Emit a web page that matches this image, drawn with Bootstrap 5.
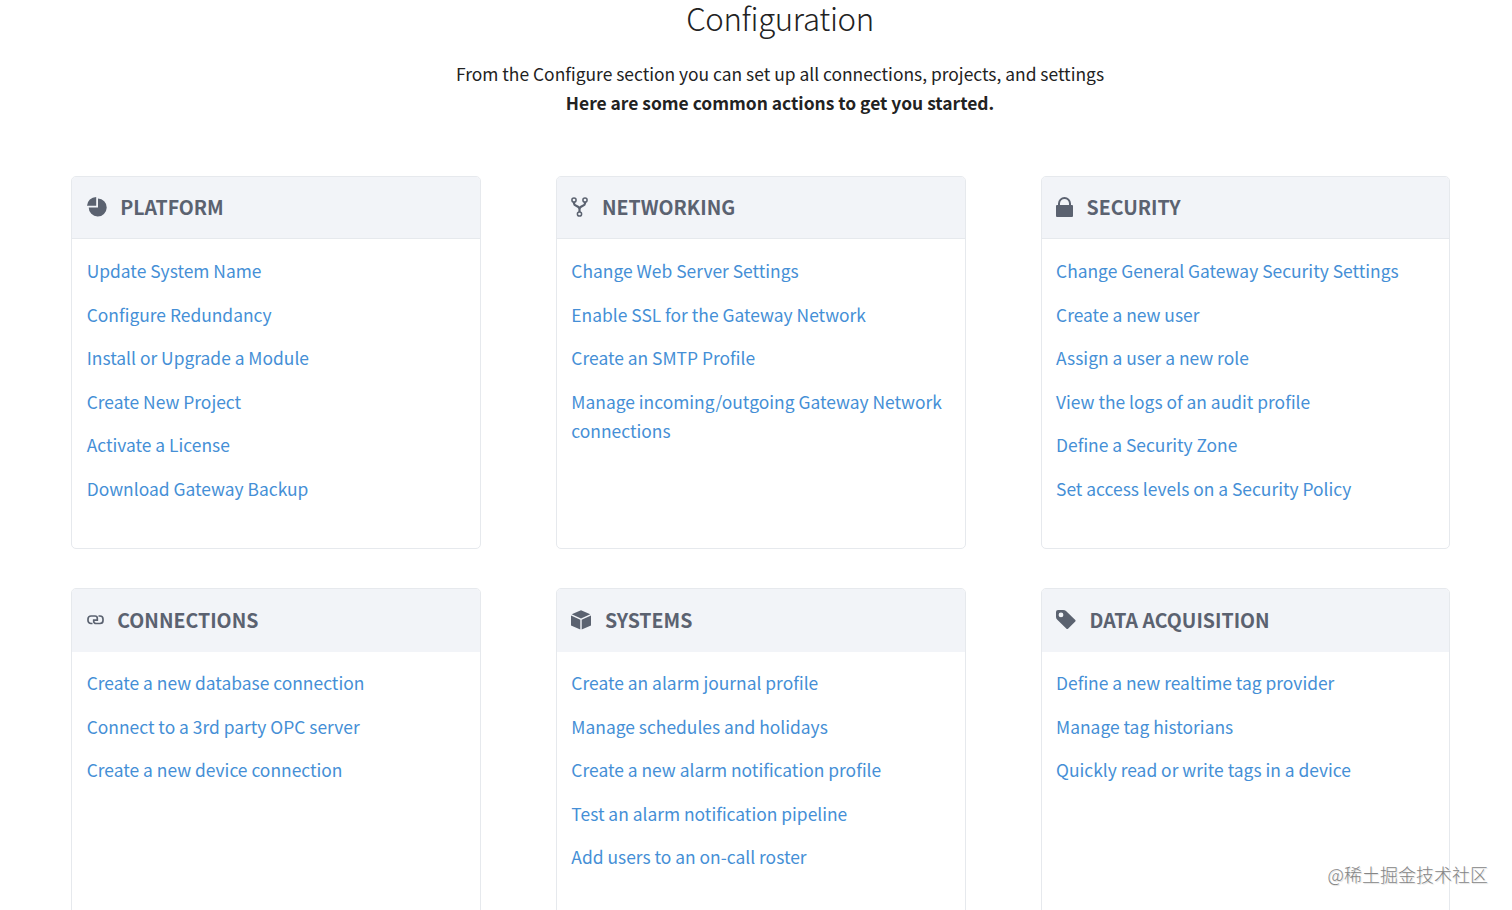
<!DOCTYPE html>
<html lang="en">
<head>
<meta charset="utf-8">
<meta name="viewport" content="width=device-width, initial-scale=1">
<title>Configuration</title>
<link href="https://cdn.jsdelivr.net/npm/bootstrap@5.3.0/dist/css/bootstrap.min.css" rel="stylesheet">
<style>
body{font-family:"Noto Sans CJK SC",sans-serif;font-size:17.420px;line-height:29.5px;color:#222;background:#fff}
.page{height:910px}
.intro{padding-left:48px;height:176px}
.intro h1{font-weight:300;font-size:31.2px;letter-spacing:-.35px;line-height:36px;margin:0 0 23px;color:#222}
.intro p{line-height:29px}
.actions{padding:0 61.6px 0 71.4px}
.actions .row{--bs-gutter-x:75px;--bs-gutter-y:39px}
.card{--bs-card-border-color:#e6e9ed;--bs-card-border-radius:5px;--bs-card-inner-border-radius:4px;height:373.3px}
.card-header{--bs-card-cap-bg:#f2f4f8;--bs-card-cap-padding-x:14.2px;height:62px;padding-bottom:10px;color:#5b6270}
.card-header h2{font-size:19.5px;font-weight:700;line-height:30px;margin-left:13.7px}
.card-header svg{height:20px;fill:#5b6270}
.lower .card-header{height:63px;padding-bottom:9px;border-bottom-color:#f2f4f8}
.card-body{--bs-card-spacer-x:14.3px;--bs-card-spacer-y:17px}
.lower .card-body{padding-top:15.8px}
.card-body ul{gap:14.05px}
.card-body a{color:#458fd6}
.watermark{right:24px;bottom:21px;font-size:18px;line-height:30px;color:#858585;font-weight:300;text-shadow:1px 1px 1px #ddd}
</style>
</head>
<body>
<main class="page position-relative overflow-hidden">
<header class="intro text-center">
<h1>Configuration</h1>
<p class="mb-0">From the Configure section you can set up all connections, projects, and settings<br><strong>Here are some common actions to get you started.</strong></p>
</header>
<section class="actions">
<div class="row row-cols-3">
<div class="col"><div class="card"><div class="card-header d-flex align-items-center"><svg width="20" viewBox="0 0 20 20"><path d="M9.200 0v8.800H0A9.200 9.200 0 0 1 9.200 0zM11 1.500a9 9 0 1 1-9.300 9H11z"/></svg><h2 class="mb-0">PLATFORM</h2></div>
<div class="card-body"><ul class="list-unstyled d-flex flex-column mb-0">
<li><a class="text-decoration-none" href="#">Update System Name</a></li><li><a class="text-decoration-none" href="#">Configure Redundancy</a></li><li><a class="text-decoration-none" href="#">Install or Upgrade a Module</a></li><li><a class="text-decoration-none" href="#">Create New Project</a></li><li><a class="text-decoration-none" href="#">Activate a License</a></li><li><a class="text-decoration-none" href="#">Download Gateway Backup</a></li></ul></div></div></div>
<div class="col"><div class="card"><div class="card-header d-flex align-items-center"><svg width="17" viewBox="0 0 17 20"><g fill="none" stroke="#5b6270"><g stroke-width="1.500"><circle cx="3" cy="3" r="2.100"/><circle cx="14" cy="3" r="2.100"/><circle cx="8.500" cy="17" r="2.100"/></g><path stroke-width="2.200" d="M3 5v1.500C3 9.500 8.500 8.500 8.500 12v3M14 5v1.500C14 9.500 8.500 8.500 8.500 12"/></g></svg><h2 class="mb-0">NETWORKING</h2></div>
<div class="card-body"><ul class="list-unstyled d-flex flex-column mb-0">
<li><a class="text-decoration-none" href="#">Change Web Server Settings</a></li><li><a class="text-decoration-none" href="#">Enable SSL for the Gateway Network</a></li><li><a class="text-decoration-none" href="#">Create an SMTP Profile</a></li><li><a class="text-decoration-none" href="#">Manage incoming/outgoing Gateway Network connections</a></li></ul></div></div></div>
<div class="col"><div class="card"><div class="card-header d-flex align-items-center"><svg width="17" viewBox="0 0 17 20"><path d="M0 9a1 1 0 0 1 1-1h1V6.500a6.500 6.500 0 0 1 13 0V8h1a1 1 0 0 1 1 1v10a1 1 0 0 1-1 1H1a1 1 0 0 1-1-1zM4 8h9V6.500a4.500 4.500 0 0 0-9 0z"/></svg><h2 class="mb-0">SECURITY</h2></div>
<div class="card-body"><ul class="list-unstyled d-flex flex-column mb-0">
<li><a class="text-decoration-none" href="#">Change General Gateway Security Settings</a></li><li><a class="text-decoration-none" href="#">Create a new user</a></li><li><a class="text-decoration-none" href="#">Assign a user a new role</a></li><li><a class="text-decoration-none" href="#">View the logs of an audit profile</a></li><li><a class="text-decoration-none" href="#">Define a Security Zone</a></li><li><a class="text-decoration-none" href="#">Set access levels on a Security Policy</a></li></ul></div></div></div>
<div class="col lower"><div class="card"><div class="card-header d-flex align-items-center"><svg width="17" viewBox="0 0 17 20"><path fill="none" stroke="#5b6270" stroke-width="1.700" d="M5.500 13.500H4A3 3 0 0 1 1 10.500V9A3 3 0 0 1 4 6H8A2.300 2.300 0 0 1 10.300 8.300V10.200H6M11.500 6H13A3 3 0 0 1 16 9V10.500A3 3 0 0 1 13 13.500H9A2.300 2.300 0 0 1 6.700 11.200V9.500"/></svg><h2 class="mb-0">CONNECTIONS</h2></div>
<div class="card-body"><ul class="list-unstyled d-flex flex-column mb-0">
<li><a class="text-decoration-none" href="#">Create a new database connection</a></li><li><a class="text-decoration-none" href="#">Connect to a 3rd party OPC server</a></li><li><a class="text-decoration-none" href="#">Create a new device connection</a></li></ul></div></div></div>
<div class="col lower"><div class="card"><div class="card-header d-flex align-items-center"><svg width="20" viewBox="0 0 20 20"><path d="M10 .3L19.300 4.300 10 8.500.7 4.300zM0 5.500l9.300 4.200V19.500L0 15.500zM20 5.500l-9.300 4.200V19.500L20 15.500z"/></svg><h2 class="mb-0">SYSTEMS</h2></div>
<div class="card-body"><ul class="list-unstyled d-flex flex-column mb-0">
<li><a class="text-decoration-none" href="#">Create an alarm journal profile</a></li><li><a class="text-decoration-none" href="#">Manage schedules and holidays</a></li><li><a class="text-decoration-none" href="#">Create a new alarm notification profile</a></li><li><a class="text-decoration-none" href="#">Test an alarm notification pipeline</a></li><li><a class="text-decoration-none" href="#">Add users to an on-call roster</a></li></ul></div></div></div>
<div class="col lower"><div class="card"><div class="card-header d-flex align-items-center"><svg width="20" viewBox="0 0 20 20"><path fill-rule="evenodd" d="M0 2Q0 0 2 0H7Q9 0 10 1L19.300 10Q20 10.700 19.300 11.500L12 18.700Q11.200 19.500 10.500 18.700L1.300 9.700Q0 8.500 0 7zM5 2.500a2.400 2.400 0 1 0 0 4.800 2.400 2.400 0 0 0 0-4.800z"/></svg><h2 class="mb-0">DATA ACQUISITION</h2></div>
<div class="card-body"><ul class="list-unstyled d-flex flex-column mb-0">
<li><a class="text-decoration-none" href="#">Define a new realtime tag provider</a></li><li><a class="text-decoration-none" href="#">Manage tag historians</a></li><li><a class="text-decoration-none" href="#">Quickly read or write tags in a device</a></li></ul></div></div></div>
</div>
</section>
<div class="watermark position-absolute">@稀土掘金技术社区</div>
</main>
<script src="https://cdn.jsdelivr.net/npm/bootstrap@5.3.0/dist/js/bootstrap.bundle.min.js"></script>
</body>
</html>
